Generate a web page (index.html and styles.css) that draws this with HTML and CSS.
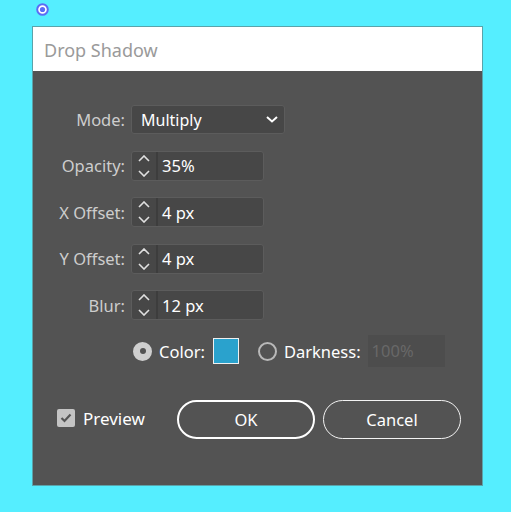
FILE: index.html
```html
<!DOCTYPE html>
<html>
<head>
<meta charset="utf-8">
<link rel="stylesheet" href="styles.css">
</head>
<body>
<div class="page">
  <svg class="pin" width="13" height="13" viewBox="0 0 13 13">
    <circle cx="6.5" cy="6.5" r="5.3" fill="#fff" stroke="#5c6cf5" stroke-width="2"/>
    <circle cx="6.5" cy="6.5" r="2.6" fill="#5c6cf5"/>
  </svg>
  <div class="dialog">
    <div class="titlebar">Drop Shadow</div>
    <div class="content">
      <div class="form">
        <div class="label">Mode:</div>
        <div class="select">
          <span class="val">Multiply</span>
          <svg class="caret" width="12" height="7" viewBox="0 0 12 7"><path d="M1 1 L6 5.5 L11 1" fill="none" stroke="#fff" stroke-width="2"/></svg>
        </div>

        <div class="label">Opacity:</div>
        <div class="spin">
          <span class="arrows"><svg width="12" height="22" viewBox="0 0 12 22"><path d="M1 6 L6 1 L11 6 M1 16 L6 21 L11 16" fill="none" stroke="#e0e0e0" stroke-width="1.6"/></svg></span>
          <span class="val">35%</span>
        </div>

        <div class="label">X Offset:</div>
        <div class="spin">
          <span class="arrows"><svg width="12" height="22" viewBox="0 0 12 22"><path d="M1 6 L6 1 L11 6 M1 16 L6 21 L11 16" fill="none" stroke="#e0e0e0" stroke-width="1.6"/></svg></span>
          <span class="val">4 px</span>
        </div>

        <div class="label">Y Offset:</div>
        <div class="spin">
          <span class="arrows"><svg width="12" height="22" viewBox="0 0 12 22"><path d="M1 6 L6 1 L11 6 M1 16 L6 21 L11 16" fill="none" stroke="#e0e0e0" stroke-width="1.6"/></svg></span>
          <span class="val">4 px</span>
        </div>

        <div class="label">Blur:</div>
        <div class="spin">
          <span class="arrows"><svg width="12" height="22" viewBox="0 0 12 22"><path d="M1 6 L6 1 L11 6 M1 16 L6 21 L11 16" fill="none" stroke="#e0e0e0" stroke-width="1.6"/></svg></span>
          <span class="val">12 px</span>
        </div>
      </div>

      <div class="shade-row">
        <span class="radio on"></span>
        <span class="opt">Color:</span>
        <span class="swatch"></span>
        <span class="radio"></span>
        <span class="opt">Darkness:</span>
        <span class="disabled">100%</span>
      </div>

      <div class="actions">
        <div class="check">
          <span class="box"><svg width="14" height="12" viewBox="0 0 14 12"><path d="M2.5 6 L5.5 9 L11.5 2.5" fill="none" stroke="#555" stroke-width="2.2"/></svg></span>
          <span class="opt">Preview</span>
        </div>
        <button class="btn primary">OK</button>
        <button class="btn">Cancel</button>
      </div>
    </div>
  </div>
</div>
</body>
</html>
```

FILE: styles.css
```css
* { box-sizing: border-box; }
html, body {
  margin: 0;
  padding: 0;
  background: #55eeff;
  font-family: "Noto Sans", "DejaVu Sans", sans-serif;
}
.page {
  width: 511px;
  height: 512px;
  padding-top: 3px;
}
.pin {
  display: block;
  margin-left: 36px;
}
.dialog {
  margin-top: 10px;
  margin-left: 32px;
  width: 451px;
  height: 460px;
  border: 1px solid #5aa3aa;
  background: #535353;
  display: flex;
  flex-direction: column;
}
.titlebar {
  height: 44px;
  background: #fff;
  color: #9a9a9a;
  font-size: 18px;
  line-height: 44px;
  padding-left: 11px;
  padding-top: 1px;
}
.content {
  padding-top: 34px;
}
.form {
  display: grid;
  grid-template-columns: 93px auto;
  column-gap: 5px;
  row-gap: 16.5px;
  justify-items: start;
  align-items: center;
}
.label {
  justify-self: end;
  color: #cdcdcd;
  font-size: 16.5px;
  margin-right: 1px;
}
.select {
  width: 154px;
  height: 29px;
  background: #474747;
  border: 1px solid #5c5c5c;
  border-radius: 3px;
  display: flex;
  align-items: center;
  justify-content: space-between;
  padding: 0 6px 0 9px;
  color: #fff;
  font-size: 16px;
}
.spin {
  width: 133px;
  height: 30px;
  background: #474747;
  border: 1px solid #5c5c5c;
  border-radius: 3px;
  display: flex;
  align-items: center;
  color: #fff;
  font-size: 16.5px;
}
.arrows {
  width: 26px;
  height: 100%;
  border-right: 2px solid #3d3d3d;
  display: flex;
  align-items: center;
  justify-content: center;
}
.spin .val {
  padding-left: 4px;
}
.shade-row {
  margin-top: 15px;
  padding-left: 100px;
  height: 32px;
  display: flex;
  align-items: center;
  color: #fff;
  font-size: 16.5px;
}
.radio {
  width: 19px;
  height: 19px;
  border-radius: 50%;
  border: 2px solid #b9b9b9;
  margin-right: 7px;
  position: relative;
}
.radio.on {
  background: #cfcfcf;
  border-color: #cfcfcf;
}
.radio.on::after {
  content: "";
  position: absolute;
  left: 4.5px;
  top: 4.5px;
  width: 6px;
  height: 6px;
  border-radius: 50%;
  background: #535353;
}
.swatch {
  width: 26px;
  height: 26px;
  border: 1px solid #f0f0f0;
  background: #2aa2cd;
  margin-left: 8px;
  margin-right: 19px;
}
.disabled {
  margin-left: 7px;
  width: 77px;
  height: 32px;
  background: #4d4d4d;
  color: #686868;
  padding-left: 4px;
  line-height: 32px;
}
.actions {
  margin-top: 33px;
  display: flex;
  align-items: center;
  padding-left: 24px;
}
.check {
  display: flex;
  align-items: center;
  width: 120px;
  margin-top: -3px;
  color: #fff;
  font-size: 17px;
}
.box {
  width: 18px;
  height: 18px;
  background: #c4c4c4;
  border-radius: 2px;
  display: flex;
  align-items: center;
  justify-content: center;
  margin-right: 8px;
}
.btn {
  width: 138px;
  height: 39px;
  border-radius: 20px;
  border: 1.5px solid #f2f2f2;
  background: transparent;
  color: #fff;
  font-family: "Noto Sans", "DejaVu Sans", sans-serif;
  font-size: 16.5px;
  margin-right: 8px;
  padding: 0;
}
.btn.primary {
  border-width: 2.5px;
  border-color: #fff;
}
```
